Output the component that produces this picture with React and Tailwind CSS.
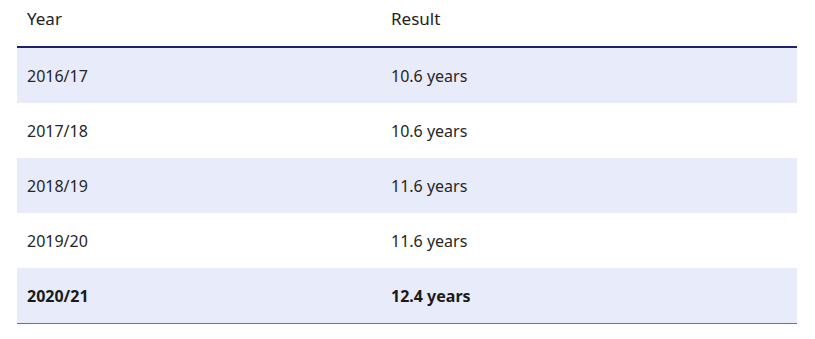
export default function App() {
  const rows = [
    ["2016/17", "10.6 years", true],
    ["2017/18", "10.6 years", false],
    ["2018/19", "11.6 years", true],
    ["2019/20", "11.6 years", false],
  ];
  return (
    <div className="w-[815px] h-[339px] bg-white pl-[17px] pr-[18px]" style={{ fontFamily: '"Noto Sans", sans-serif' }}>
      <div className="grid grid-cols-[364px_1fr] h-[48px] border-b-2 border-[#1c2266] text-[17px] leading-6 text-[#222]">
        <div className="pl-[10px] pt-[7px]">Year</div>
        <div className="pl-[10px] pt-[7px]">Result</div>
      </div>
      {rows.map(([y, r, shade]) => (
        <div key={y} className={`grid grid-cols-[364px_1fr] h-[55px] items-center text-[16px] text-[#262626] ${shade ? "bg-[#e8ebf9]" : "bg-white"}`}>
          <div className="pl-[10px]">{y}</div>
          <div className="pl-[10px]">{r}</div>
        </div>
      ))}
      <div className="grid grid-cols-[364px_1fr] h-[56px] items-center text-[16px] font-bold text-[#1a1a1a] bg-[#e8ebf9] border-b border-[#6b719f]">
        <div className="pl-[10px]">2020/21</div>
        <div className="pl-[10px]">12.4 years</div>
      </div>
    </div>
  );
}
